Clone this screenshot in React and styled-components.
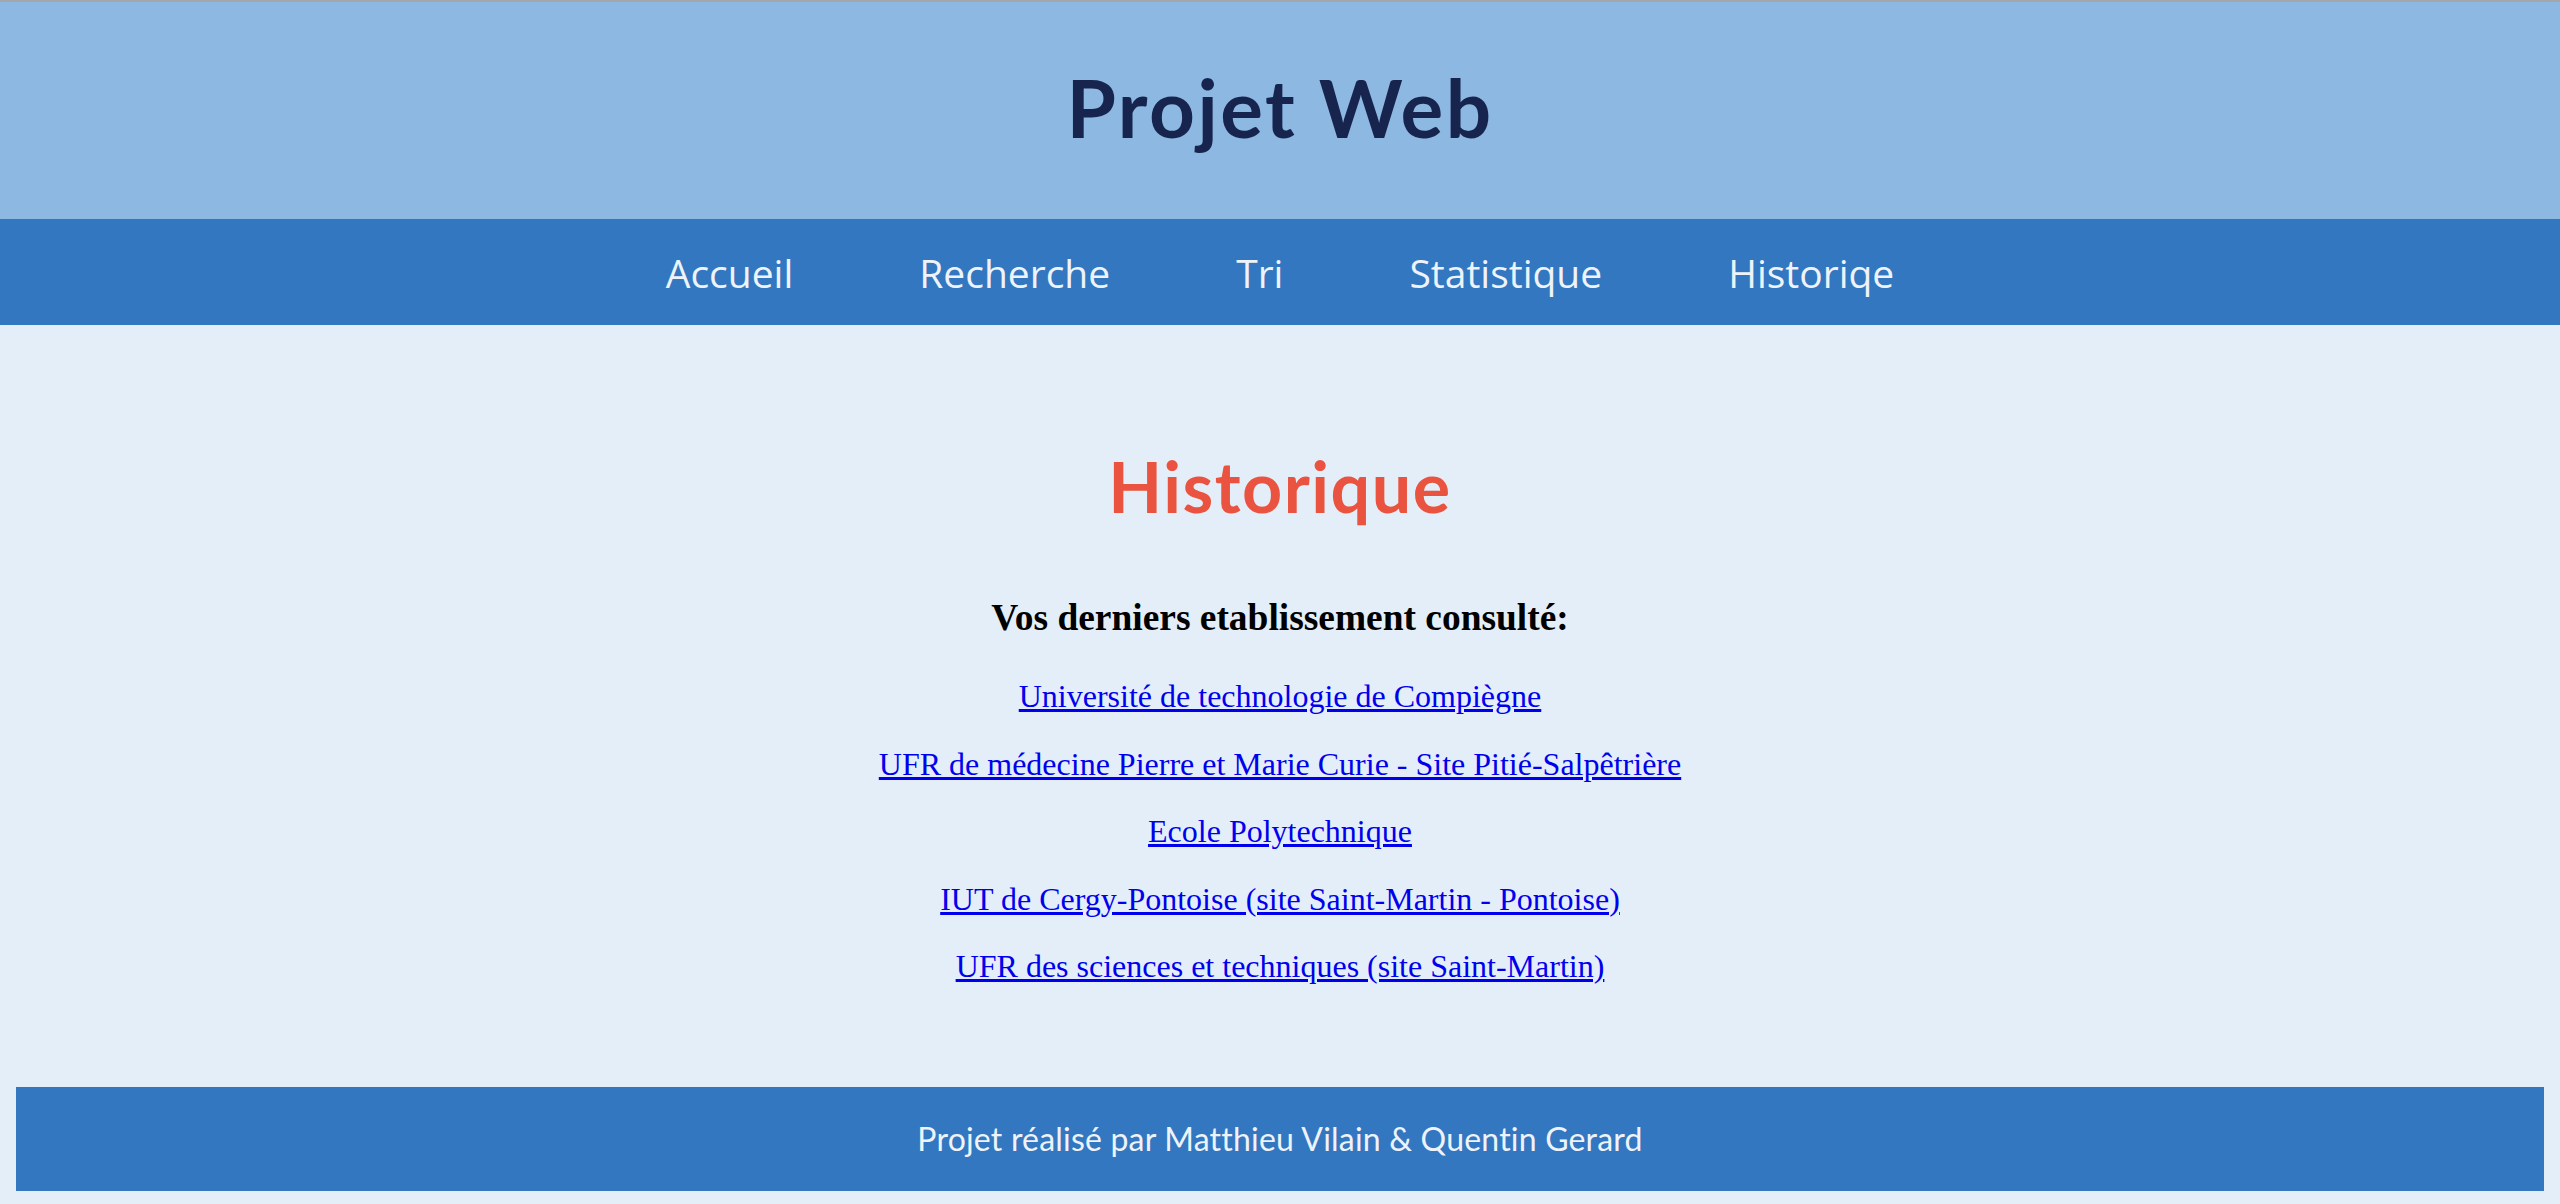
import styled, { createGlobalStyle } from "styled-components";

const GlobalStyle = createGlobalStyle`
    html, body {
        margin: 0;
        padding: 0;
        background-color: #e3eef8;
    }
`

const links = [
    "Université de technologie de Compiègne",
    "UFR de médecine Pierre et Marie Curie - Site Pitié-Salpêtrière",
    "Ecole Polytechnique",
    "IUT de Cergy-Pontoise (site Saint-Martin - Pontoise)",
    "UFR des sciences et techniques (site Saint-Martin)",
];

const menu = ["Accueil", "Recherche", "Tri", "Statistique", "Historiqe"];

export default function App() {
  return (
    <Page>
        <GlobalStyle />
        <Header>
            <Title>Projet Web</Title>
        </Header>
        <Nav>
            {menu.map((item) => (
                <NavLink key={item} href="#">{item}</NavLink>
            ))}
        </Nav>
        <Main>
            <PageTitle>Historique</PageTitle>
            <SubTitle>Vos derniers etablissement consulté:</SubTitle>
            {links.map((name) => (
                <Item key={name}>
                    <Link href="#">{name}</Link>
                </Item>
            ))}
        </Main>
        <Footer>Projet réalisé par Matthieu Vilain &amp; Quentin Gerard</Footer>
    </Page>
  )
}

const Page = styled.div`
    display: flex;
    flex-direction: column;
    min-height: 1204px;
    background-color: #e3eef8;
`
const Header = styled.header`
    border-top: 2px solid #a4a6a9;
    background-color: #8db8e1;
    display: flex;
    align-items: center;
    justify-content: center;
    padding-bottom: 8px;
    height: 209px;
`
const Title = styled.h1`
    margin: 0;
    font-family: Lato, "Open Sans", sans-serif;
    font-weight: 700;
    font-size: 80px;
    color: #16244e;
    letter-spacing: 2.5px;
`
const Nav = styled.nav`
    height: 106px;
    background-color: #3377c0;
    display: flex;
    align-items: center;
    justify-content: center;
`
const NavLink = styled.a`
    padding: 0 63px;
    font-family: "Open Sans", "DejaVu Sans", sans-serif;
    font-size: 39px;
    color: #eef3f9;
    text-decoration: none;
`
const Main = styled.main`
    text-align: center;
    padding: 119px 0 71px;
    font-family: "Liberation Serif", "Times New Roman", serif;
`
const PageTitle = styled.h2`
    margin: 0 0 68px;
    font-family: Lato, "Open Sans", sans-serif;
    font-weight: 700;
    font-size: 70px;
    letter-spacing: 1.5px;
    color: #e9533f;
`
const SubTitle = styled.h3`
    margin: 0 0 39px;
    font-size: 37.44px;
    font-weight: 700;
    color: #000;
`
const Item = styled.p`
    margin: 30.5px 0;
    font-size: 32px;
`
const Link = styled.a`
    color: #0000ee;
`
const Footer = styled.footer`
    margin: 0 16px;
    height: 104px;
    background-color: #3377c0;
    display: flex;
    align-items: center;
    justify-content: center;
    font-family: Lato, "Open Sans", sans-serif;
    font-size: 32px;
    letter-spacing: 0.2px;
    color: #eef3f9;
`
